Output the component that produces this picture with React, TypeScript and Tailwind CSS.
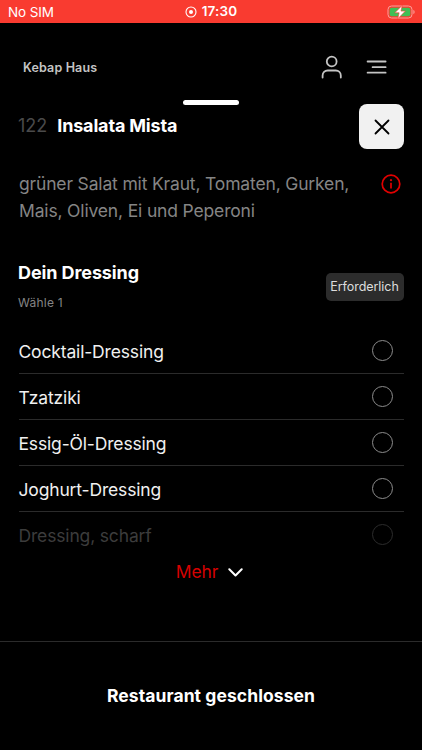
import React, { useState } from "react";

interface Dressing {
  name: string;
  faded?: boolean;
}

const dressings: Dressing[] = [
  { name: "Cocktail-Dressing" },
  { name: "Tzatziki" },
  { name: "Essig-Öl-Dressing" },
  { name: "Joghurt-Dressing" },
  { name: "Dressing, scharf", faded: true },
];

const StatusBar = () => (
  <div className="grid h-[23px] grid-cols-3 items-center bg-[#f93b30] pr-[7px] pl-2 text-white">
    <span className="mt-[2px] text-[13.5px] leading-none tracking-[-0.1px]">No SIM</span>
    <div className="flex items-center justify-center gap-[5px] pt-px pr-px">
      <svg width="12" height="12" viewBox="0 0 12 12" fill="none">
        <circle cx="6" cy="6" r="5" stroke="white" strokeWidth="1.1" />
        <circle cx="6" cy="6" r="2" fill="white" />
      </svg>
      <span className="text-[13.5px] leading-none font-semibold tracking-[0.1px]">17:30</span>
    </div>
    <svg className="justify-self-end" width="28" height="14" viewBox="0 0 28 14" fill="none">
      <rect x="1" y="1" width="24" height="12" rx="3.5" stroke="#fba09a" strokeWidth="1" />
      <rect x="2.7" y="2.7" width="20.6" height="8.6" rx="2" fill="#3fbf55" />
      <path d="M26.4 5v4c.8-.3 1.2-1.1 1.2-2s-.4-1.7-1.2-2z" fill="#fba09a" />
      <path d="M15.2.4 7.8 7.8h4.3l-1.3 5.900 7.600-7.600h-4.400z" fill="white" stroke="#f93b30" strokeWidth=".6" />
    </svg>
  </div>
);

const Header = () => (
  <header className="flex h-[77px] items-start justify-between pt-[31px] pr-[34px] pl-[23px] text-[#c4c4c4]">
    <span className="mt-[6px] text-[12.5px] leading-4 font-semibold tracking-[0.15px]">Kebap Haus</span>
    <div className="flex">
      <svg width="22" height="26" viewBox="0 0 22 26" fill="none" stroke="currentColor" strokeWidth="1.8" strokeLinecap="round">
        <circle cx="11.7" cy="7.500" r="4.900" />
        <path d="M2.600 23.500v-2a5 5 0 0 1 5-5h8.200a5 5 0 0 1 5 5v2" />
      </svg>
      <svg className="ml-[24px]" width="22" height="26" viewBox="0 0 22 26" fill="none" stroke="currentColor" strokeWidth="1.8" strokeLinecap="round">
        <path d="M1.600 7.500h18M6.600 13.200h13M1.600 18.700h18" />
      </svg>
    </div>
  </header>
);

const App = () => {
  const [selected, setSelected] = useState<string | null>(null);

  return (
    <div className="flex h-[750px] w-[422px] flex-col overflow-hidden bg-black font-['Inter',sans-serif] text-white">
      <StatusBar />
      <Header />
      <div className="mx-auto h-[5px] w-14 rounded-full bg-white" />

      <main className="flex-1 pr-[18px] pl-[19px]">
        <div className="flex h-[44px] items-start justify-between">
          <h1 className="mt-[9px] text-[18px] leading-6 font-bold tracking-[-0.17px]">
            <span className="mr-[10px] -ml-px font-normal tracking-normal text-[#4a4a4a]">122</span>
            Insalata Mista
          </h1>
          <button className="-mt-px flex size-[45px] items-center justify-center rounded-lg bg-[#f1f1f1]">
            <svg width="16" height="16" viewBox="0 0 16 16" fill="none" stroke="black" strokeWidth="1.8" strokeLinecap="round">
              <path d="M1.500 1.500l13 13M14.500 1.500l-13 13" />
            </svg>
          </button>
        </div>

        <div className="mt-[21px] flex h-[79px] justify-between">
          <p className="text-[17.5px] leading-[27px] tracking-[-0.16px] whitespace-nowrap text-[#858585]">
            grüner Salat mit Kraut, Tomaten, Gurken,
            <br />
            Mais, Oliven, Ei und Peperoni
          </p>
          <svg className="mt-[4px] mr-[3px] shrink-0" width="20" height="20" viewBox="0 0 20 20" fill="none" stroke="#e00000" strokeWidth="1.7">
            <circle cx="10" cy="10" r="8.8" />
            <path d="M10 8.700v5.700" />
            <circle cx="10" cy="6.200" r="1.100" fill="#e00000" stroke="none" />
          </svg>
        </div>

        <div className="flex h-[79px] items-start justify-between pt-[12px]">
          <div className="-ml-px">
            <h2 className="text-[18px] leading-6 font-bold tracking-[-0.1px]">Dein Dressing</h2>
            <p className="mt-[10px] text-[12px] leading-4 tracking-[0.25px] text-[#858585]">Wähle 1</p>
          </div>
          <span className="mt-[12px] flex h-7 w-[78px] items-center justify-center rounded-[5px] bg-[#2c2c2c] pt-px pr-px text-[12.5px] tracking-[-0.05px] text-[#dddddd]">
            Erforderlich
          </span>
        </div>

        <ul>
          {dressings.map((d) => (
            <li
              key={d.name}
              onClick={() => setSelected(d.name)}
              className={`flex h-[46px] cursor-pointer items-center justify-between pr-[11px] ${
                d.faded ? "pb-px text-[#3c3c3c]" : "border-b border-[#2b2b2b] text-[#f0f0f0]"
              }`}
            >
              <span className="-ml-[0.5px] pt-[2px] text-[17.5px] leading-6 tracking-[-0.16px]">{d.name}</span>
              <span
                className={`flex size-[21px] items-center justify-center rounded-full border ${
                  d.faded ? "border-[#2c2c2c]" : "border-[#8c8c8c]"
                }`}
              >
                {selected === d.name && <span className="size-[11px] rounded-full bg-white" />}
              </span>
            </li>
          ))}
        </ul>

        <button className="mx-auto flex h-[28px] items-center gap-[10px] pr-[4px] text-[17.5px] tracking-[-0.16px] text-[#d60000]">
          Mehr
          <svg width="15" height="9" viewBox="0 0 15 9" fill="none" stroke="white" strokeWidth="2" strokeLinecap="round" strokeLinejoin="round">
            <path d="M1.300 1.300 7.500 7.500l6.200-6.200" />
          </svg>
        </button>
      </main>

      <footer className="flex h-[109px] items-center justify-center border-t border-[#2b2b2b] text-[17.5px] font-bold tracking-[0.08px]">
        Restaurant geschlossen
      </footer>
    </div>
  );
};

export default App;
